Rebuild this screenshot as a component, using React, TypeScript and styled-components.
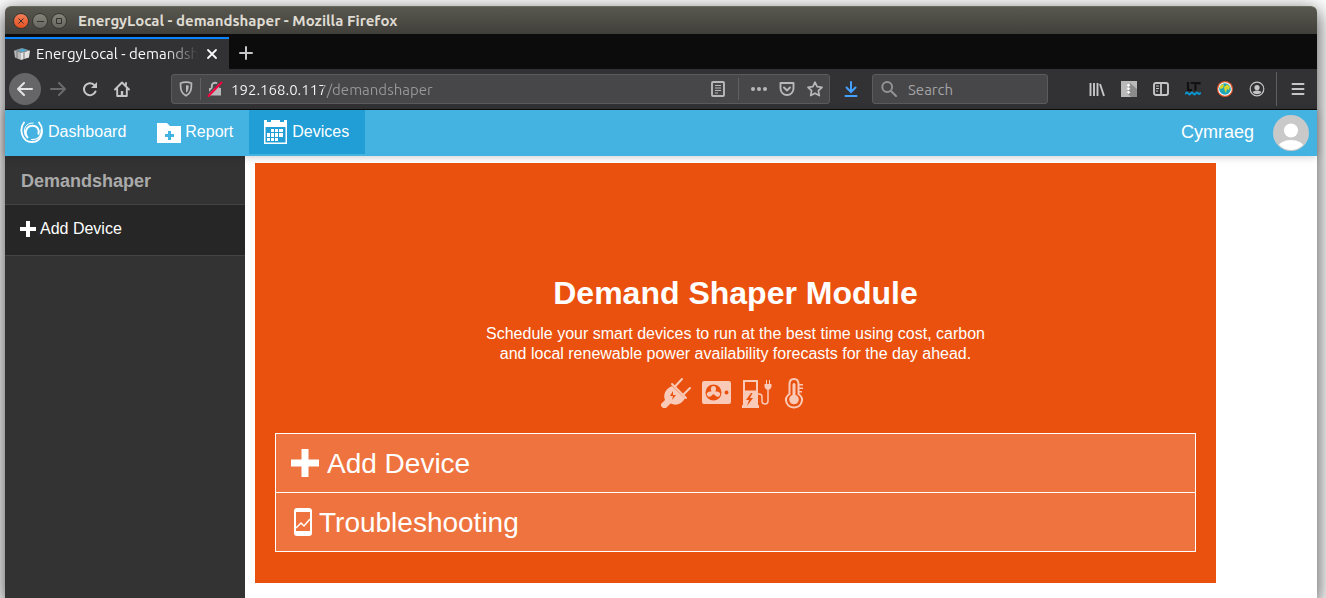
import React from "react";
import styled, { createGlobalStyle } from "styled-components";

const GlobalStyle = createGlobalStyle`
  *, *::before, *::after { box-sizing: border-box; }
  html, body, #root { height: 100%; }
  body { margin: 0; background: #fff; overflow: hidden; }
  svg { display: block; flex: none; }
  button { border: 0; padding: 0; background: none; color: inherit; font: inherit; cursor: pointer; }
  a { color: inherit; text-decoration: none; }
`;

const chromeFont = `Ubuntu, "Noto Sans", sans-serif`;
const pageFont = `"Liberation Sans", Arial, sans-serif`;

/* ---------- window ---------- */
const Desktop = styled.div`
  height: 100%;
  padding: 6px 9px 0 5px;
`;

const Window = styled.div`
  height: 100%;
  display: flex;
  flex-direction: column;
  border-radius: 6px 6px 0 0;
  box-shadow: 0 6px 20px 2px rgba(0, 0, 0, 0.65);
  font-family: ${pageFont};
`;

const TitleBar = styled.header`
  display: flex;
  align-items: center;
  height: 28px;
  padding-left: 8px;
  border-radius: 6px 6px 0 0;
  border-top: 1px solid #6b6a60;
  background: linear-gradient(#59584f, #403f3a);
  color: #dfdbd2;
  font: bold 15px ${chromeFont};
`;

const WindowButtons = styled.div`
  display: flex;
  gap: 3px;
  margin-right: 11px;
`;

const WindowButton = styled.button<{ $close?: boolean }>`
  width: 16px;
  height: 16px;
  border-radius: 50%;
  border: 1px solid #373631;
  background: ${(p) => (p.$close ? "linear-gradient(#f37e5a, #e2501f)" : "linear-gradient(#85847a, #67665f)")};
  color: #33322e;
`;

/* ---------- tabs ---------- */
const TabStrip = styled.div`
  display: flex;
  gap: 1px;
  height: 35px;
  padding-top: 3px;
  background: #0c0c0d;
`;

const Tab = styled.div`
  display: flex;
  align-items: center;
  width: 224px;
  padding: 0 9px;
  gap: 6px;
  border-top: 2px solid #0a84ff;
  background: #323234;
  color: #f9f9fa;
`;

const TabTitle = styled.span`
  flex: 1;
  overflow: hidden;
  white-space: nowrap;
  font: 15px/20px ${chromeFont};
  mask-image: linear-gradient(90deg, #000 80%, transparent);
`;

const ToolButton = styled.button<{ $round?: boolean; $dim?: boolean }>`
  display: flex;
  align-items: center;
  justify-content: center;
  width: 32px;
  height: 32px;
  flex: none;
  color: ${(p) => (p.$dim ? "#6a6a6d" : "#c6c6c8")};
  ${(p) => p.$round && "margin-right: 1px; background: #666668; border-radius: 50%; color: #e4e4e5;"}
`;

const TabClose = styled.button`
  width: 16px;
  height: 16px;
`;

/* ---------- toolbar ---------- */
const Toolbar = styled.div`
  display: flex;
  align-items: center;
  height: 41px;
  padding: 0 3px 0 4px;
  background: #323234;
  border-bottom: 1px solid #0c0c0d;
`;

const Field = styled.div<{ $search?: boolean }>`
  display: flex;
  align-items: center;
  height: 30px;
  min-width: 0;
  border: 1px solid #5b5b5e;
  border-radius: 3px;
  background: #474749;
  color: #b8b8ba;
  ${(p) =>
    p.$search
      ? "width: 176px; flex: none; gap: 11px; padding: 0 8px; margin: 0 33px 0 5px;"
      : "flex: 1; gap: 6px; padding: 0 6px; margin: 0 5px 0 33px;"}
`;

const AddressInput = styled.input`
  flex: 1;
  min-width: 0;
  height: 28px;
  margin-left: 2px;
  padding: 0;
  border: 0;
  outline: 0;
  font: 15px ${chromeFont};
  color: transparent;
  background: linear-gradient(90deg, #f9f9fa 92px, #98989b 92px);
  background-clip: text;
  -webkit-background-clip: text;
`;

const SearchInput = styled.input`
  flex: 1;
  min-width: 0;
  padding: 0;
  border: 0;
  outline: 0;
  background: none;
  font: 15px ${chromeFont};
  &::placeholder { color: #a3a3a5; opacity: 1; }
`;

const Divider = styled.span<{ $tall?: boolean }>`
  width: 1px;
  height: ${(p) => (p.$tall ? 34 : 22)}px;
  background: #5e6064;
  ${(p) => p.$tall && "margin: 0 5px 0 3px;"}
`;

const FieldActions = styled.div`
  display: flex;
  align-items: center;
  gap: 12px;
  button { display: flex; }
`;

/* ---------- page ---------- */
const NavBar = styled.nav`
  display: flex;
  align-items: flex-start;
  height: 46px;
  flex: none;
  position: relative;
  background: #44b3e2;
  color: #fff;
  box-shadow: 0 1px 8px rgba(0, 0, 0, 0.2);
`;

const NavLink = styled.a<{ $active?: boolean }>`
  display: flex;
  align-items: center;
  gap: 4px;
  height: 44px;
  padding: 0 16px 0 15px;
  font-size: 16px;
  background: ${(p) => (p.$active ? "#209ed5" : "none")};
`;

const NavEnd = styled.div`
  display: flex;
  align-items: center;
  gap: 19px;
  height: 46px;
  margin-left: auto;
  padding-right: 8px;
`;

const Language = styled.a`
  font-size: 18px;
  line-height: 20px;
  padding-bottom: 2px;
`;

const Body = styled.div`
  display: flex;
  flex: 1;
  min-height: 0;
  background: #fff;
`;

const Sidebar = styled.aside`
  width: 240px;
  flex: none;
  background: #333;
`;

const SidebarTitle = styled.h4`
  height: 48px;
  margin: 0;
  padding: 0 16px;
  font-size: 18px;
  line-height: 50px;
  color: #aaa;
`;

const SidebarLink = styled.a`
  display: flex;
  align-items: center;
  gap: 4px;
  height: 52px;
  padding: 0 15px 2px;
  border: solid #444;
  border-width: 1px 0;
  background: #262626;
  color: #fff;
  font-size: 16px;
  line-height: 20px;
`;

const Main = styled.main`
  flex: 1;
  min-width: 0;
  padding: 7px 10px;
`;

const Hero = styled.section`
  max-width: 961px;
  padding: 110px 20px 31px;
  background: #ea510e;
  color: #fff;
  text-align: center;
`;

const HeroTitle = styled.h1`
  margin: 0 0 11px;
  font-size: 32px;
  line-height: 40px;
`;

const HeroText = styled.p`
  max-width: 500px;
  margin: 0 auto 13px;
  font-size: 16px;
  line-height: 20px;
`;

const DeviceIcons = styled.div`
  display: flex;
  justify-content: center;
  gap: 8px;
  margin-bottom: 24px;
  color: #f9cab7;
`;

const ActionList = styled.div`
  border: 1px solid #fff;
`;

const Action = styled.a`
  display: flex;
  align-items: center;
  gap: 4px;
  height: 58px;
  padding: 0 15px;
  background: rgba(255, 255, 255, 0.2);
  font-size: 28px;
  & + & { border-top: 1px solid #fff; height: 59px; }
`;

const ActionLabel = styled.span`
  padding-top: 2px;
  line-height: 32px;
`;

/* ---------- icons ---------- */
type IconProps = { size?: number; children: React.ReactNode; width?: number };
const Line = ({ size = 16, children }: IconProps) => (
  <svg width={size} height={size} viewBox="0 0 16 16" fill="none" stroke="currentColor" strokeWidth="2" strokeLinecap="round" strokeLinejoin="round" aria-hidden>
    {children}
  </svg>
);
const Solid = ({ size = 16, width, children }: IconProps) => (
  <svg width={width ?? size} height={size} viewBox={`0 0 ${width ?? size} ${size}`} fill="currentColor" aria-hidden>
    {children}
  </svg>
);

const BrowserChrome = () => (
  <>
    <TitleBar>
      <WindowButtons>
        <WindowButton $close aria-label="Close">
          <svg width="14" height="14" viewBox="0 0 14 14" stroke="currentColor"><path d="M4.5 4.5l5 5m0-5l-5 5" /></svg>
        </WindowButton>
        <WindowButton aria-label="Minimise">
          <svg width="14" height="14" viewBox="0 0 14 14" stroke="currentColor"><path d="M4 7.5h7" /></svg>
        </WindowButton>
        <WindowButton aria-label="Maximise">
          <svg width="14" height="14" viewBox="0 0 14 14" stroke="currentColor" fill="none"><path d="M4.500 4.500h5v5h-5z" /></svg>
        </WindowButton>
      </WindowButtons>
      EnergyLocal - demandshaper - Mozilla Firefox
    </TitleBar>
    <TabStrip>
      <Tab>
        <svg width="16" height="16" viewBox="0 0 16 16" aria-hidden>
          <path d="M0 4.500L7 6.500V14L1 11.500z" fill="#b9b9b9" />
          <path d="M7 6.500L16 4.500L15 11.500L7 14z" fill="#e2e2e0" />
          <path d="M0 4.500L8 2l8 2.500L7 6.500z" fill="#83949c" />
          <path d="M5 4.500L9 3l3.500 1L8 5.500z" fill="#36b1e6" />
          <path d="M10 6v7M3 6v6" stroke="#777" />
        </svg>
        <TabTitle>EnergyLocal - demandshaper</TabTitle>
        <TabClose aria-label="Close tab">
          <Line><path d="M4 4l8 8m0-8l-8 8" strokeWidth="1.800" /></Line>
        </TabClose>
      </Tab>
      <ToolButton aria-label="New tab">
        <Line><path d="M8 2v12M2 8h12" /></Line>
      </ToolButton>
    </TabStrip>
    <Toolbar>
      <ToolButton $round aria-label="Back"><Line><path d="M15 8H1.500M7 2L1 8l6 6" /></Line></ToolButton>
      <ToolButton $dim aria-label="Forward"><Line><path d="M1 8h13.500M9 2l6 6-6 6" /></Line></ToolButton>
      <ToolButton aria-label="Reload">
        <Line><path d="M13.500 10.500A6 6 0 1 1 12 3.700" /><path d="M15 1v6H9z" fill="currentColor" stroke="none" /></Line>
      </ToolButton>
      <ToolButton aria-label="Home">
        <Line><path d="M1 8.500L8 1.500l7 7M3.200 8v7h9.600V8M12 2v2" strokeWidth="1.900" /><path d="M8 14v-4" strokeWidth="2.400" strokeLinecap="butt" /></Line>
      </ToolButton>
      <Field>
        <Line><path d="M8 1.200c2 0 4 .4 5.500 1C13.500 8 13 12.500 8 14.800 3 12.500 2.500 8 2.500 2.200c1.500-.6 3.500-1 5.500-1z" strokeWidth="1.700" /><path d="M8 4.200v7.600c2.300-1.500 2.700-4 2.700-7.200z" fill="currentColor" stroke="none" /></Line>
        <Divider />
        <Line>
          <path d="M4.800 7V5a3.200 3.200 0 0 1 6.400 0v2" strokeWidth="1.900" />
          <path d="M2 7h12v7.500H2z" fill="currentColor" stroke="none" />
          <path d="M0 14L13 .5" stroke="#474749" strokeWidth="1.500" />
          <path d="M1.500 15L14.500 1.500" stroke="#f5003d" />
        </Line>
        <AddressInput aria-label="Address" defaultValue="192.168.0.117/demandshaper" />
        <FieldActions>
          <button aria-label="Reader view">
            <Line><rect x="2" y="1" width="12" height="14" rx="1" strokeWidth="1.900" /><path d="M5 4.500h6M5 7h6M5 9.500h6M5 12h3" strokeWidth="1" strokeLinecap="butt" /></Line>
          </button>
          <Divider />
          <button aria-label="Page actions">
            <Solid><circle cx="2" cy="8" r="2" /><circle cx="8" cy="8" r="2" /><circle cx="14" cy="8" r="2" /></Solid>
          </button>
          <button aria-label="Save to Pocket">
            <Line><path d="M1.500 2h13v5.500a6.500 6.500 0 0 1-13 0zM5 6.500l3 3 3-3" strokeWidth="1.900" /></Line>
          </button>
          <button aria-label="Bookmark">
            <Line><path d="M8 1.200l2.100 4.500 4.900.6-3.600 3.400.9 4.900L8 12.200l-4.300 2.400.9-4.900L1 6.300l4.900-.6z" strokeWidth="1.700" /></Line>
          </button>
        </FieldActions>
      </Field>
      <ToolButton aria-label="Downloads">
        <svg width="16" height="16" viewBox="0 0 16 16" fill="none" stroke="#45a1ff" strokeWidth="2" strokeLinecap="round" aria-hidden>
          <path d="M8 1v9.500M3.500 6.500L8 11l4.500-4.500M2.500 15h11" />
        </svg>
      </ToolButton>
      <Field $search>
        <Line><circle cx="6.200" cy="6" r="4.900" stroke="#939395" /><path d="M10 10l5 5" stroke="#939395" /></Line>
        <SearchInput type="search" aria-label="Search" placeholder="Search" />
      </Field>
      <ToolButton aria-label="Library">
        <Line><path d="M1.500 2v13M5 2v13M8.500 2v13M11 3l4 12" strokeLinecap="butt" strokeWidth="1.900" /></Line>
      </ToolButton>
      <ToolButton aria-label="Archive extension">
        <svg width="16" height="16" viewBox="0 0 16 16" aria-hidden>
          <path d="M0 0h16v16H0z" fill="#b9b9b9" />
          <path d="M9 2l7 6v8H10L6 12z" fill="#8b8b8b" />
          <path d="M6.500 3h2v1h1l-2 2-2-2h1zM6.500 6.500h2v1h1l-2 2-2-2h1zM6.500 10h2v1h1l-2 2-2-2h1z" fill="#fff" />
        </svg>
      </ToolButton>
      <ToolButton aria-label="Sidebars">
        <Line><rect x="1" y="2" width="14" height="12" rx="2" strokeWidth="1.900" /><path d="M8 2v12" strokeWidth="1.800" /><path d="M3 5h3M3 7.500h3M3 10h2" strokeWidth="1" strokeLinecap="butt" /></Line>
      </ToolButton>
      <ToolButton aria-label="LanguageTool">
        <svg width="16" height="16" viewBox="0 0 16 16" fill="none" aria-hidden>
          <path d="M3 1v8h4M6.500 2.500V2h8v1.500M10.500 2v7.500" stroke="#111" strokeWidth="2.200" />
          <path d="M0 13l2-1.500L4.500 13.500 7 11.500l2.500 2 2.500-2 2 1.500 2-1" stroke="#0c94cf" strokeWidth="2" />
        </svg>
      </ToolButton>
      <ToolButton aria-label="Language switcher">
        <svg width="16" height="16" viewBox="0 0 16 16" aria-hidden>
          <circle cx="8" cy="8" r="8" fill="#e0562c" />
          <circle cx="8" cy="8" r="6.800" fill="#fff" />
          <circle cx="8" cy="8" r="5.800" fill="#1da5b8" />
          <path d="M3 5l3-2 1 1-1 3-3 1zM7 6l3-2.500 3 2-1 3.500-2-1-1 4-1.500-3z" fill="#d6d62a" />
        </svg>
      </ToolButton>
      <ToolButton aria-label="Account">
        <Line><circle cx="8" cy="8" r="6.800" strokeWidth="1.200" /><circle cx="8" cy="6.500" r="2.600" fill="currentColor" stroke="none" /><path d="M3.500 11c2-1 2.500-1.500 4.500-1.500s2.500.5 4.500 1.500c-2 3-7 3-9 0z" fill="currentColor" stroke="none" /></Line>
      </ToolButton>
      <Divider $tall />
      <ToolButton aria-label="Menu">
        <Line><path d="M2.500 3h11M2.500 8h11M2.500 13h11" /></Line>
      </ToolButton>
    </Toolbar>
  </>
);

const PlusIcon = ({ size, width }: { size: number; width?: number }) => (
  <svg width={width ?? size} height={size} viewBox={`0 0 ${((width ?? size) * 16) / size} 16`} fill="currentColor" aria-hidden>
    <path d="M6 0h4v6h6v4h-6v6H6v-6H0V6h6z" />
  </svg>
);

export default function App() {
  return (
    <>
      <GlobalStyle />
      <Desktop>
        <Window>
          <BrowserChrome />
          <NavBar>
            <NavLink href="#dashboard">
              <Solid size={24}>
                <g fill="none" stroke="currentColor" strokeLinecap="round">
                  <path d="M4 2.500C-1 9 1.500 22 12 22S24.500 9 19 2.500" strokeWidth="1.800" />
                  <path d="M7.500 17.500C3.500 12 7 5.800 12.500 5.800c5 0 7 4 6 8" strokeWidth="2" />
                  <path d="M5.500 16C2 9 6.500 2.500 13 3" strokeWidth="1" />
                  <path d="M21 9.500C22 16 17.500 20 11.500 19.500" strokeWidth="1.200" />
                </g>
              </Solid>
              Dashboard
            </NavLink>
            <NavLink href="#report">
              <Solid size={24}>
                <path fillRule="evenodd" d="M0 3h10l3 3h11v17H0zM11 11v3H8v3h3v3h3v-3h3v-3h-3v-3z" />
              </Solid>
              Report
            </NavLink>
            <NavLink href="#devices" $active>
              <Solid size={24}>
                <path fillRule="evenodd" d="M0 0h3v2h4V0h9v2h4V0h3v24H0zM1.500 7v15.500h20V7z" />
                <path d="M7 9h3v3H7zM11 9h3v3h-3zM15 9h4v3h-4zM3 13h3v4H3zM7 13h3v4H7zM11 13h3v4h-3zM15 13h4v4h-4zM3 18h3v3H3zM7 18h3v3H7zM11 18h3v3h-3z" />
              </Solid>
              Devices
            </NavLink>
            <NavEnd>
              <Language href="#cy">Cymraeg</Language>
              <button aria-label="Account">
                <svg width="36" height="36" viewBox="0 0 36 36" aria-hidden>
                  <defs><clipPath id="avatar"><circle cx="18" cy="18" r="17" /></clipPath></defs>
                  <circle cx="18" cy="18" r="18" fill="#c9c9c9" />
                  <circle cx="18" cy="15.500" r="7" fill="#fff" />
                  <ellipse cx="18" cy="33" rx="13" ry="8" fill="#fff" clipPath="url(#avatar)" />
                </svg>
              </button>
            </NavEnd>
          </NavBar>
          <Body>
            <Sidebar>
              <SidebarTitle>Demandshaper</SidebarTitle>
              <SidebarLink href="#add"><PlusIcon size={16} />Add Device</SidebarLink>
            </Sidebar>
            <Main>
              <Hero>
                <HeroTitle>Demand Shaper Module</HeroTitle>
                <HeroText>
                  Schedule your smart devices to run at the best time using cost, carbon and local renewable power
                  availability forecasts for the day ahead.
                </HeroText>
                <DeviceIcons>
                  <Solid size={32}>
                    <path fillRule="evenodd" d="M12 9L25 21.500c-4 6-9 7.500-14.500 5L6 31H3l-2-2v-2l4-4C3 18 5 12 12 9zm1 5l-3 5 3 0-1 4 4-5-3 0z" />
                    <path d="M12 7l14 14M15.500 9L22 2M24 17l6-6" stroke="currentColor" strokeWidth="2" strokeLinecap="round" />
                  </Solid>
                  <Solid size={32}>
                    <path fillRule="evenodd" d="M4 4h25q2 0 2 2v19q0 2-2 2H4q-2 0-2-2V6q0-2 2-2zM13.500 7.500a8 8 0 1 0 0 16 8 8 0 0 0 0-16zM26.500 13.500a2 2 0 1 0 0 4 2 2 0 0 0 0-4z" />
                    <circle cx="13.500" cy="15.500" r="2" />
                    <path d="M12 15c-2-3-1-6 1.500-6s3.500 3 1.500 6zM13 17c-2 3.500-5 3.500-6 1s2-4 5-3.500zM14 17c2 3.500 5 3.500 6 1s-2-4-5-3.500z" />
                  </Solid>
                  <Solid size={32}>
                    <path fillRule="evenodd" d="M3 3h15v25h1v3H2v-3h1zM5 5v8.500h11V5zM11 16l-5 7h3l-2 6 6-8h-3l2.500-5z" />
                    <path d="M18 17h1q3 0 3 3v4q0 3 3 3t3-3V13" fill="none" stroke="currentColor" strokeWidth="1.500" />
                    <path d="M24.500 7h7v2q0 3-3.500 4-3.500-1-3.500-4zM26 3h1v4h-1zM29 3h1v4h-1z" />
                  </Solid>
                  <Solid size={32}>
                    <g transform="translate(1 0)">
                      <path d="M8.500 17V7q0-5 4.500-5t4.500 5v10q5 3.500 3 8.500-2 5-7.500 5t-7.500-5Q3.500 20.500 8.500 17z" fill="none" stroke="currentColor" strokeWidth="2" />
                      <circle cx="13" cy="22.500" r="4.800" />
                      <path d="M11.500 7q1.500-2 3 0v13h-3zM18 7h4v1.500h-4zM18 10.500h4V12h-4zM18 14h3v1.500h-3z" />
                    </g>
                  </Solid>
                </DeviceIcons>
                <ActionList>
                  <Action href="#add"><PlusIcon size={28} width={32} /><ActionLabel>Add Device</ActionLabel></Action>
                  <Action href="#troubleshooting">
                    <Solid size={28} width={24}>
                      <path fillRule="evenodd" d="M6 0h12q3 0 3 3v22q0 3-3 3H6q-3 0-3-3V3q0-3 3-3zM5 4v19h14V4z" />
                      <path d="M5 20l5-5 3 3 6-7" fill="none" stroke="currentColor" strokeWidth="1.500" />
                    </Solid>
                    <ActionLabel>Troubleshooting</ActionLabel>
                  </Action>
                </ActionList>
              </Hero>
            </Main>
          </Body>
        </Window>
      </Desktop>
    </>
  );
}
